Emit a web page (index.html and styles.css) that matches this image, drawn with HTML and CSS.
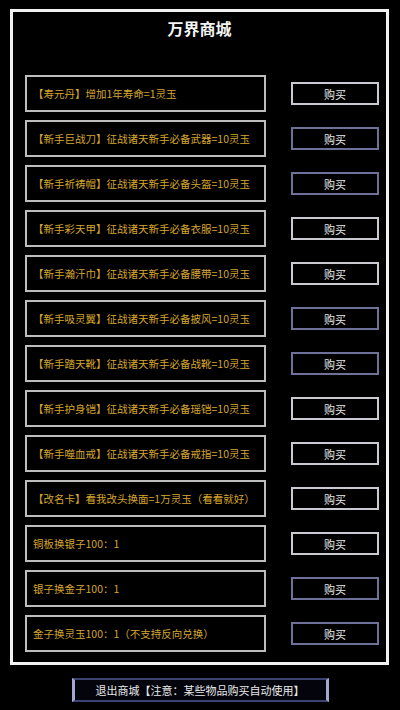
FILE: index.html
```html
<!DOCTYPE html>
<html lang="zh">
<head>
<meta charset="utf-8">
<title>万界商城</title>
<link rel="stylesheet" href="styles.css">
</head>
<body>
<div class="frame">
  <div class="title">万界商城</div>
  <div class="list">
    <div class="row"><div class="item">【寿元丹】增加1年寿命=1灵玉</div><div class="buy light">购买</div></div>
    <div class="row"><div class="item">【新手巨战刀】征战诸天新手必备武器=10灵玉</div><div class="buy blue">购买</div></div>
    <div class="row"><div class="item">【新手祈祷帽】征战诸天新手必备头盔=10灵玉</div><div class="buy blue">购买</div></div>
    <div class="row"><div class="item">【新手彩天甲】征战诸天新手必备衣服=10灵玉</div><div class="buy light">购买</div></div>
    <div class="row"><div class="item">【新手瀚汗巾】征战诸天新手必备腰带=10灵玉</div><div class="buy light">购买</div></div>
    <div class="row"><div class="item">【新手吸灵翼】征战诸天新手必备披风=10灵玉</div><div class="buy blue">购买</div></div>
    <div class="row"><div class="item">【新手踏天靴】征战诸天新手必备战靴=10灵玉</div><div class="buy blue">购买</div></div>
    <div class="row"><div class="item">【新手护身铠】征战诸天新手必备瑶铠=10灵玉</div><div class="buy light">购买</div></div>
    <div class="row"><div class="item">【新手噬血戒】征战诸天新手必备戒指=10灵玉</div><div class="buy light">购买</div></div>
    <div class="row"><div class="item">【改名卡】看我改头换面=1万灵玉（看看就好）</div><div class="buy light">购买</div></div>
    <div class="row"><div class="item">铜板换银子100：1</div><div class="buy light">购买</div></div>
    <div class="row"><div class="item">银子换金子100：1</div><div class="buy blue">购买</div></div>
    <div class="row"><div class="item">金子换灵玉100：1（不支持反向兑换）</div><div class="buy blue">购买</div></div>
  </div>
</div>
<div class="footer">
  <div class="exit">退出商城【注意：某些物品购买自动使用】</div>
</div>
</body>
</html>
```
FILE: styles.css
```css
html, body {
  margin: 0;
  padding: 0;
  background: #000;
}
body {
  width: 400px;
  height: 710px;
  overflow: hidden;
  font-family: "Noto Sans CJK SC", "Noto Sans", sans-serif;
}
.frame {
  box-sizing: border-box;
  width: 379px;
  height: 656px;
  margin: 9px 0 0 10px;
  border: 3px solid #f2f2f2;
  padding: 0 7px 10px 12px;
  display: flex;
  flex-direction: column;
}
.title {
  height: 32px;
  line-height: 32px;
  margin-bottom: 31px;
  text-align: center;
  color: #f4f4f4;
  font-size: 16px;
  font-weight: bold;
  margin-left: -5px;
}
.list {
  display: flex;
  flex-direction: column;
  gap: 8px;
}
.row {
  display: flex;
  align-items: center;
  height: 37px;
}
.item {
  box-sizing: border-box;
  width: 241px;
  height: 37px;
  border: 2px solid #bdbdbd;
  padding-left: 6px;
  display: flex;
  align-items: center;
  color: #d6a62c;
  font-size: 10.5px;
  white-space: nowrap;
  overflow: hidden;
}
.buy {
  box-sizing: border-box;
  width: 88px;
  height: 23px;
  margin-left: 25px;
  border: 2px solid #c9c9d2;
  display: flex;
  align-items: center;
  justify-content: center;
  color: #e6e6e6;
  font-size: 11px;
}
.buy.blue {
  border-color: #6e7299;
}
.footer {
  display: flex;
  justify-content: center;
  margin-top: 13px;
}
.exit {
  box-sizing: border-box;
  width: 257px;
  height: 24px;
  border-top: 2px solid #3c4272;
  border-bottom: 2px solid #3c4272;
  border-left: 3px solid #a4a8d0;
  border-right: 3px solid #a4a8d0;
  background: #04040c;
  display: flex;
  align-items: center;
  justify-content: center;
  color: #e8e8e8;
  font-size: 11px;
}
```
